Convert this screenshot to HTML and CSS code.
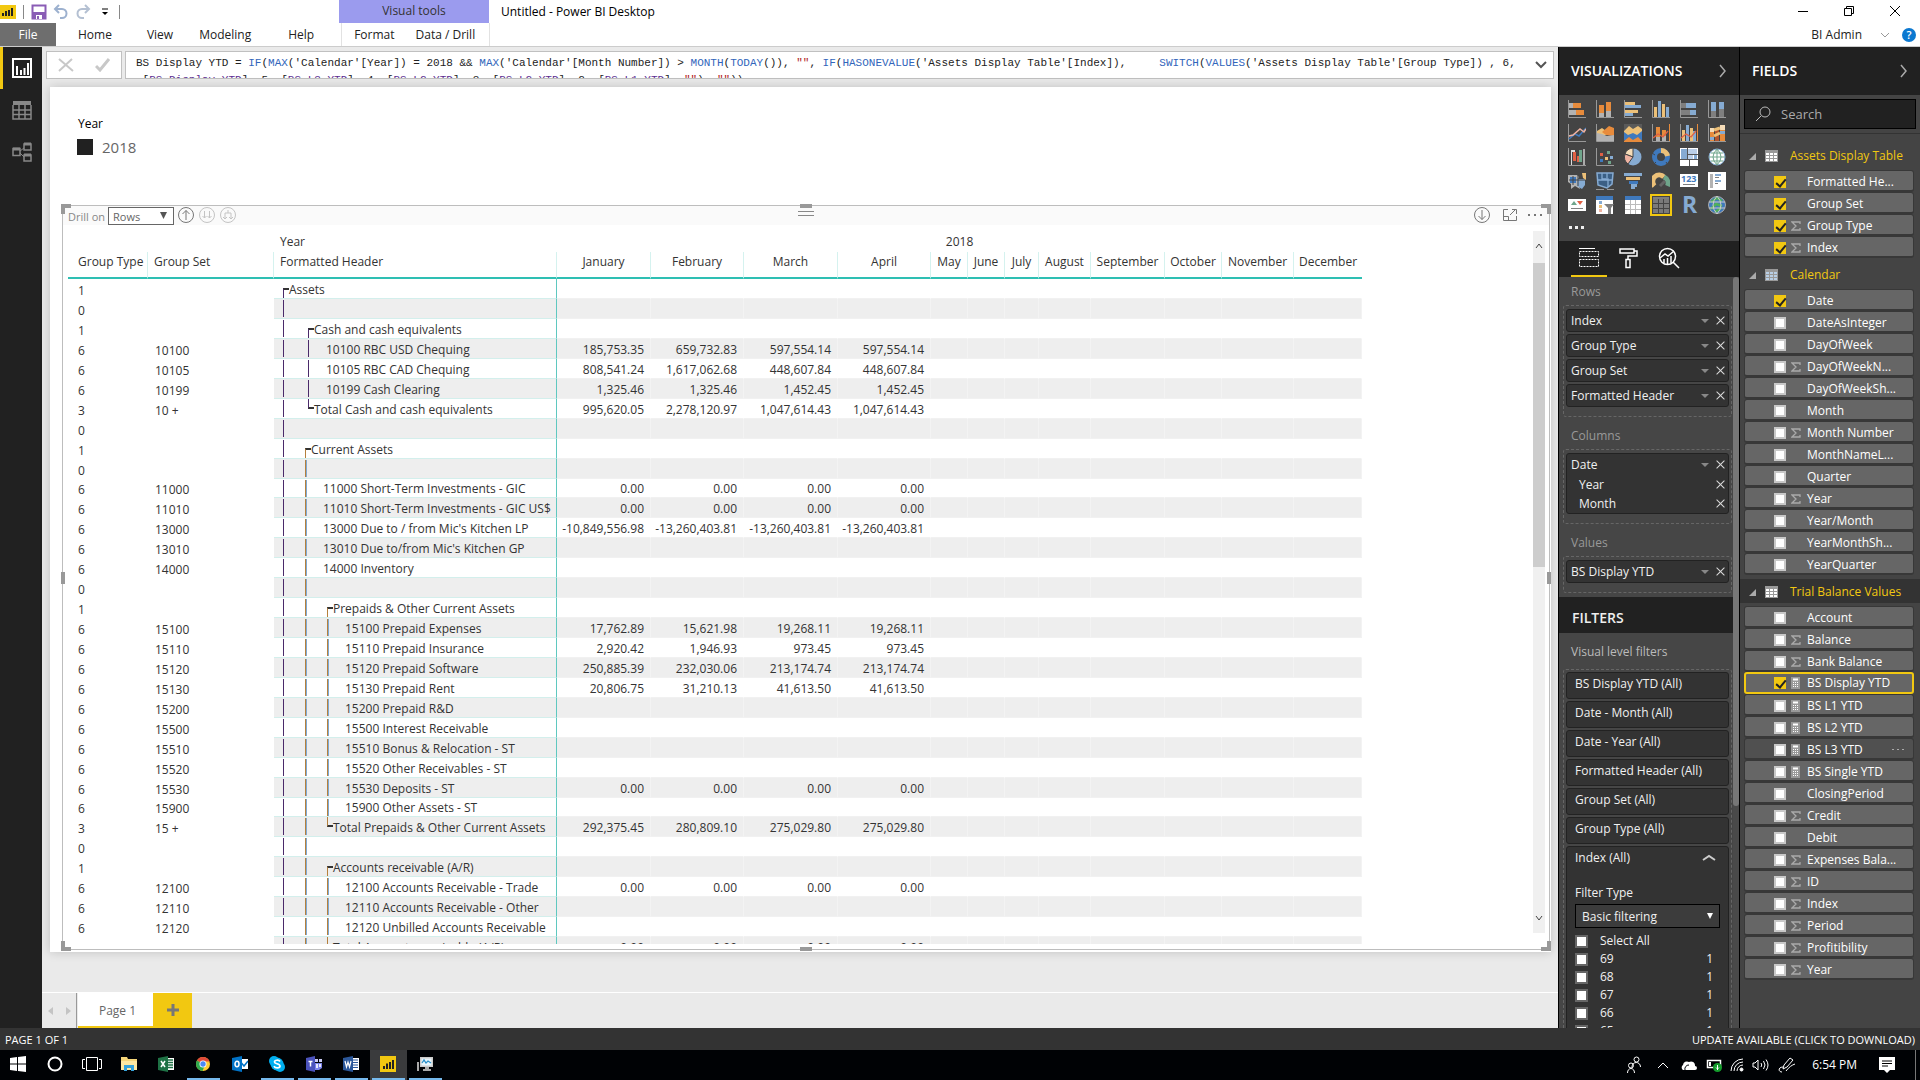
FILE: index.html
```html
<!DOCTYPE html>
<html lang="en">
<head>
<meta charset="utf-8">
<title>Untitled - Power BI Desktop</title>
<link rel="stylesheet" href="styles.css">
</head>
<body>
<header class="titlebar">
  <div class="quick">
    <svg class="logo" width="16" height="14" viewBox="0 0 16 14"><rect width="16" height="14" fill="#f2c811"/><path d="M3 11V8M6 11V6M9 11V5M12 11V3" stroke="#222" stroke-width="2"/></svg>
    <i class="tick-sep"></i>
    <button class="ico" aria-label="Save"><svg width="16" height="16" viewBox="0 0 16 16"><path d="M1.500 1.500h13v13h-13z" fill="#fff" stroke="#8a5cb5" stroke-width="2"/><path d="M2 8h12v6H2z" fill="#8a5cb5"/><path d="M5 11h6v4H5z" fill="#fff"/><path d="M6 12h2v3H6z" fill="#8a5cb5"/></svg></button>
    <button class="ico" aria-label="Undo"><svg width="16" height="16" viewBox="0 0 16 16" fill="none" stroke="#9db1cf" stroke-width="2"><path d="M6 1L2 5l4 4M2 5h7a4 4 0 0 1 0 9H7"/></svg></button>
    <button class="ico" aria-label="Redo"><svg width="16" height="16" viewBox="0 0 16 16" fill="none" stroke="#b4c0d2" stroke-width="2"><path d="M10 1l4 4-4 4M14 5H7a4 4 0 0 0 0 9h2"/></svg></button>
    <button class="ico" aria-label="Customize toolbar"><svg width="8" height="8" viewBox="0 0 8 8"><path d="M1 1h6" stroke="#000"/><path d="M1 4h6L4 7z"/></svg></button>
    <i class="tick-sep"></i>
  </div>
  <div class="context-title">Visual tools</div>
  <h1>Untitled - Power BI Desktop</h1>
  <div class="window-buttons">
    <button aria-label="Minimize"><svg width="12" height="12" viewBox="0 0 12 12"><path d="M1 6.500h10" stroke="#000"/></svg></button>
    <button aria-label="Restore"><svg width="12" height="12" viewBox="0 0 12 12" fill="none" stroke="#000"><path d="M1.500 3.500h7v7h-7zM3.500 3.500v-2h7v7h-2"/></svg></button>
    <button aria-label="Close"><svg width="12" height="12" viewBox="0 0 12 12" stroke="#000"><path d="M1 1l10 10M11 1L1 11"/></svg></button>
  </div>
</header>
<nav class="ribbon">
  <button class="file">File</button>
  <button>Home</button><button>View</button><button>Modeling</button><button>Help</button>
  <div class="context-tabs"><button>Format</button><button>Data / Drill</button></div>
  <div class="account"><span>BI Admin</span>
    <svg width="10" height="6" viewBox="0 0 10 6" fill="none" stroke="#999"><path d="M1 1l4 4 4-4"/></svg>
    <button class="help" aria-label="Help">?</button></div>
</nav>

<div class="workspace">
  <nav class="rail">
    <button class="on" aria-label="Report"><svg width="20" height="20" viewBox="0 0 20 20"><path d="M1 1h18v18H1z" fill="none" stroke="#fff" stroke-width="2"/><path d="M5 17V8M9 17v-5M12.500 17v-7M16 17V5" stroke="#fff" stroke-width="2"/></svg></button>
    <button aria-label="Data"><svg width="20" height="20" viewBox="0 0 20 20" fill="none" stroke="#888"><path d="M1 3h18" stroke-width="4"/><path d="M1 5v14h18V5M1 10h18M1 14.500h18M7 5v14M13 5v14" stroke-width="1.500"/></svg></button>
    <button aria-label="Relationships"><svg width="20" height="20" viewBox="0 0 20 20" fill="none" stroke="#888"><path d="M1 6.500h7v7H1zM12 2h7v6h-7zM12 13h7v6h-7z" stroke-width="1.500"/><path d="M12 2h7M12 13h7M1 7h7" stroke-width="3"/><path d="M8 9l4-3M8 11l4 4"/></svg></button>
  </nav>

  <main>
    <div class="formula">
      <div class="formula-buttons">
        <button aria-label="Cancel"><svg width="16" height="14" viewBox="0 0 16 14" stroke="#c8c8c8" stroke-width="2"><path d="M1 1l14 12M14 1L1 13"/></svg></button>
        <button aria-label="Commit"><svg width="16" height="14" viewBox="0 0 16 14" fill="none" stroke="#c8c8c8" stroke-width="3"><path d="M1 8l4 4 9-11"/></svg></button>
      </div>
      <div class="formula-box">
        <pre class="code" role="textbox" aria-label="Measure formula">BS Display YTD = <b>IF</b>(<b>MAX</b>('Calendar'[Year]) = 2018 &amp;&amp; <b>MAX</b>('Calendar'[Month Number]) &gt; <b>MONTH</b>(<b>TODAY</b>()), <s>""</s>, <b>IF</b>(<b>HASONEVALUE</b>('Assets Display Table'[Index]),     <b>SWITCH</b>(<b>VALUES</b>('Assets Display Table'[Group Type]) , 6,
 [<u>BS Display YTD</u>], 5, [<u>BS L3 YTD</u>], 4, [<u>BS L2 YTD</u>], 3, [<u>BS L2 YTD</u>], 2, [<u>BS L1 YTD</u>], <s>""</s>), <s>""</s>))</pre>
        <button aria-label="Expand formula"><svg width="12" height="8" viewBox="0 0 12 8" fill="none" stroke="#555" stroke-width="2"><path d="M1 1l5 5 5-5"/></svg></button>
      </div>
    </div>

    <section class="page">
      <div class="slicer"><div class="slicer-title">Year</div>
        <label><input type="checkbox" checked> 2018</label></div>
      <div class="visual">
        <div class="visual-bar">
          <label for="drill">Drill on</label>
          <span class="drill-box"><select id="drill"><option>Rows</option></select><svg width="8" height="8" viewBox="0 0 8 8"><path d="M0 0h7L3.500 7z" fill="#555"/></svg></span>
          <button aria-label="Drill up"><svg width="18" height="18" viewBox="0 0 18 18" fill="none" stroke="#777"><circle cx="9" cy="9" r="7.500"/><path d="M9 14V4.500M5.500 8L9 4.500 12.500 8"/></svg></button>
          <button aria-label="Next level"><svg width="18" height="18" viewBox="0 0 18 18" fill="none" stroke="#c4c4c4"><circle cx="9" cy="9" r="7.500"/><path d="M6.500 5v7M4.500 10l2 2 2-2M11.500 5v7M9.500 10l2 2 2-2"/></svg></button>
          <button aria-label="Expand level"><svg width="18" height="18" viewBox="0 0 18 18" fill="none" stroke="#c4c4c4"><circle cx="9" cy="9" r="7.500"/><path d="M9 4v3M6 12V7h6v5M4 11l2 2 2-2M10 11l2 2 2-2"/></svg></button>
          <i class="grip"></i>
          <button class="push" aria-label="Drill down"><svg width="18" height="18" viewBox="0 0 18 18" fill="none" stroke="#777"><circle cx="9" cy="9" r="7.500"/><path d="M9 4v9.500M5.500 10L9 13.500 12.500 10"/></svg></button>
          <button class="focus" aria-label="Focus mode"><svg width="16" height="14" viewBox="0 0 16 14" fill="none" stroke="#777"><path d="M6 1.500H1.500v11h13V8M1.500 8.500h5v4M8 7l6-6M10 1.500h4.500V6"/></svg></button>
          <button aria-label="More options"><svg width="16" height="4" viewBox="0 0 16 4" fill="#777"><path d="M1 1h2v2H1zM7 1h2v2H7zM13 1h2v2h-2z"/></svg></button>
        </div>
        <div class="visual-body">
          <div class="matrix-clip">
            <table class="matrix">
              <colgroup><col class="c80"><col class="c126"><col class="c283"><col class="c94"><col class="c93"><col class="c94"><col class="c93"><col class="c37"><col class="c37"><col class="c34"><col class="c52"><col class="c74"><col class="c57"><col class="c72"><col class="c68"></colgroup>
              <thead>
                <tr class="top"><th></th><th></th><th class="left">Year</th><th colspan="12">2018</th></tr>
                <tr class="heads"><th class="left">Group Type</th><th class="left">Group Set</th><th class="left">Formatted Header</th><th>January</th><th>February</th><th>March</th><th>April</th><th>May</th><th>June</th><th>July</th><th>August</th><th>September</th><th>October</th><th>November</th><th>December</th></tr>
              </thead>
              <tbody id="rows"></tbody>
            </table>
          </div>
          <div class="scroll"><svg width="8" height="6" viewBox="0 0 8 6" fill="none" stroke="#444"><path d="M1 5l3-4 3 4"/></svg><i></i><svg width="8" height="6" viewBox="0 0 8 6" fill="none" stroke="#444"><path d="M1 1l3 4 3-4"/></svg></div>
        </div>
        <i class="h tl"></i><i class="h tr"></i><i class="h bl"></i><i class="h br"></i>
        <i class="h tc"></i><i class="h bc"></i><i class="h ml"></i><i class="h mr"></i>
      </div>
    </section>

    <footer class="tabs">
      <div class="pager"><button aria-label="Previous page"><svg width="6" height="8" viewBox="0 0 6 8"><path d="M5 0v8L0 4z" fill="#c4c4c4"/></svg></button><button aria-label="Next page"><svg width="6" height="8" viewBox="0 0 6 8"><path d="M1 0v8l5-4z" fill="#c4c4c4"/></svg></button></div>
      <button class="tab">Page 1</button>
      <button class="add" aria-label="New page"><svg width="12" height="12" viewBox="0 0 12 12" stroke="#777" stroke-width="3"><path d="M6 0v12M0 6h12"/></svg></button>
    </footer>
  </main>

  <aside class="viz">
    <div class="pane-head"><h2>VISUALIZATIONS</h2><svg width="8" height="14" viewBox="0 0 8 14" fill="none" stroke="#aaa" stroke-width="1.500"><path d="M1 1l5 6-5 6"/></svg></div>
    <div class="gallery" id="gallery"></div>
    <div class="viz-tabs">
      <button class="on" aria-label="Fields"><svg width="22" height="22" viewBox="0 0 22 22" fill="none" stroke="#fff"><path d="M1 1.500h16"/><path d="M1.500 4.500h19v5h-19zM1.500 12.500h19v7h-19z" stroke-dasharray="2 1"/></svg></button>
      <button aria-label="Format"><svg width="20" height="22" viewBox="0 0 20 22" fill="none" stroke="#fff" stroke-width="1.500"><path d="M1 2h14v4H1zM15 4h3v5H9v4M7 12.500h4v8H7z"/></svg></button>
      <button aria-label="Analytics"><svg width="22" height="22" viewBox="0 0 22 22" fill="none" stroke="#fff" stroke-width="1.500"><circle cx="9.500" cy="9.500" r="8"/><path d="M15 15l6 6M2 11l5-4 3 2 6-5M6 16v-4M9.500 17v-6M13 16V9"/></svg></button>
    </div>
    <div class="viz-scroll">
      <div class="viz-inner">
        <h3>Rows</h3>
        <div class="well">
          <div class="pill"><div><span>Index</span><button class="dd" aria-label="Options"></button><button class="x" aria-label="Remove"></button></div></div>
          <div class="pill"><div><span>Group Type</span><button class="dd" aria-label="Options"></button><button class="x" aria-label="Remove"></button></div></div>
          <div class="pill"><div><span>Group Set</span><button class="dd" aria-label="Options"></button><button class="x" aria-label="Remove"></button></div></div>
          <div class="pill"><div><span>Formatted Header</span><button class="dd" aria-label="Options"></button><button class="x" aria-label="Remove"></button></div></div>
        </div>
        <h3>Columns</h3>
        <div class="well">
          <div class="pill"><div><span>Date</span><button class="dd" aria-label="Options"></button><button class="x" aria-label="Remove"></button></div>
            <div class="sub"><span>Year</span><button class="x" aria-label="Remove"></button></div>
            <div class="sub"><span>Month</span><button class="x" aria-label="Remove"></button></div></div>
        </div>
        <h3>Values</h3>
        <div class="well">
          <div class="pill"><div><span>BS Display YTD</span><button class="dd" aria-label="Options"></button><button class="x" aria-label="Remove"></button></div></div>
        </div>
        <h2 class="filters-head">FILTERS</h2>
        <h3 class="level">Visual level filters</h3>
        <div class="well filters">
          <div class="card">BS Display YTD (All)</div>
          <div class="card">Date - Month (All)</div>
          <div class="card">Date - Year (All)</div>
          <div class="card">Formatted Header (All)</div>
          <div class="card">Group Set (All)</div>
          <div class="card">Group Type (All)</div>
          <div class="card open">
            <div class="card-head">Index (All)<svg width="14" height="8" viewBox="0 0 14 8" fill="none" stroke="#ccc" stroke-width="2"><path d="M1 6l6-4 6 4"/></svg></div>
            <label class="ftype" for="ftype">Filter Type</label>
            <span class="fselect"><select id="ftype"><option>Basic filtering</option></select><svg width="6" height="6" viewBox="0 0 6 6"><path d="M0 0h6L3 6z" fill="#fff"/></svg></span>
            <label class="opt"><input type="checkbox"><span>Select All</span></label>
            <label class="opt"><input type="checkbox"><span>69</span><em>1</em></label>
            <label class="opt"><input type="checkbox"><span>68</span><em>1</em></label>
            <label class="opt"><input type="checkbox"><span>67</span><em>1</em></label>
            <label class="opt"><input type="checkbox"><span>66</span><em>1</em></label>
            <label class="opt"><input type="checkbox"><span>65</span><em>1</em></label>
          </div>
        </div>
      </div>
      <i class="thumb"></i>
    </div>
  </aside>

  <aside class="fields">
    <div class="pane-head"><h2>FIELDS</h2><svg width="8" height="14" viewBox="0 0 8 14" fill="none" stroke="#aaa" stroke-width="1.500"><path d="M1 1l5 6-5 6"/></svg></div>
    <div class="search-wrap"><label class="search"><svg width="16" height="16" viewBox="0 0 16 16" fill="none" stroke="#bbb"><circle cx="10" cy="6" r="5"/><path d="M6 10l-5 5"/></svg><input type="text" placeholder="Search" aria-label="Search"></label></div>
    <div id="fields"></div>
  </aside>
</div>

<div class="status"><span>PAGE 1 OF 1</span><a href="#">UPDATE AVAILABLE (CLICK TO DOWNLOAD)</a></div>

<div class="taskbar">
  <button aria-label="Start"><svg width="16" height="16" viewBox="0 0 16 16" fill="#fff"><path d="M0 2l7-1v6.500H0zM8 1l8-1v7.500H8zM0 8.500h7V15l-7-1zM8 8.500h8V16l-8-1z"/></svg></button>
  <button aria-label="Cortana"><svg width="16" height="16" viewBox="0 0 16 16"><circle cx="8" cy="8" r="6.500" fill="none" stroke="#fff" stroke-width="2"/></svg></button>
  <button aria-label="Task view"><svg width="20" height="16" viewBox="0 0 20 16" fill="none" stroke="#fff"><path d="M4.500 1.500h11v13h-11zM3 3.500H.5v9H3M17 3.500h2.500v9H17"/></svg></button>
  <button aria-label="File Explorer"><svg width="16" height="16" viewBox="0 0 16 16"><path d="M0 1h6l1 2h9v11H0z" fill="#f5d67a"/><path d="M0 5h16v9H0z" fill="#ffe9a2"/><path d="M3 15V9h10v6h-3v-3H6v3z" fill="#35a3dc"/></svg></button>
  <button aria-label="Excel"><svg width="16" height="16" viewBox="0 0 16 16"><path d="M9 2h7v12H9z" fill="#fff"/><path d="M10 4h5M10 6.500h5M10 9h5M10 11.500h5" stroke="#1e7145" stroke-width="1.500"/><path d="M0 2l10-2v16L0 14z" fill="#1e7145"/><path d="M3 5l4 6M7 5l-4 6" stroke="#fff" stroke-width="1.500"/></svg></button>
  <button class="run" aria-label="Chrome"><svg width="16" height="16" viewBox="0 0 16 16"><circle cx="8" cy="8" r="7" fill="#fc3"/><path d="M8 8L2 4.500A7 7 0 0 1 14.500 5.500H8z" fill="#e04a3a"/><path d="M8 8L2 4.500A7 7 0 0 0 7.500 15L10 9z" fill="#2da94f"/><circle cx="8" cy="8" r="3.500" fill="#fff"/><circle cx="8" cy="8" r="2.700" fill="#4a8af4"/></svg></button>
  <button aria-label="Outlook"><svg width="16" height="16" viewBox="0 0 16 16"><path d="M8 3h8v10H8z" fill="#fff"/><path d="M9.500 7l2.500 3 4-5" fill="none" stroke="#0072c6" stroke-width="1.500"/><path d="M0 2l10-2v16L0 14z" fill="#0072c6"/><ellipse cx="5" cy="8" rx="2" ry="2.700" fill="none" stroke="#fff" stroke-width="1.500"/></svg></button>
  <button class="run" aria-label="Skype"><svg width="16" height="16" viewBox="0 0 16 16"><circle cx="5" cy="5" r="5" fill="#00aff0"/><circle cx="11" cy="11" r="5" fill="#00aff0"/><circle cx="8" cy="8" r="6.500" fill="#00aff0"/><path d="M11 5.500C10 3.500 5.500 4 5.500 6s5.500 1.500 5.500 4-5 2.500-6 .2" fill="none" stroke="#fff" stroke-width="1.700"/></svg></button>
  <button class="run" aria-label="Teams"><svg width="16" height="16" viewBox="0 0 16 16"><path d="M9 3h3v3H9zM13 3h3v3h-3z" fill="#c9cbf3"/><path d="M9 7h7v5l-3 2H9z" fill="#7b83eb"/><path d="M10 8h2v4h-2zM13 8h2v3h-2z" fill="#e8e9fb"/><path d="M0 2l9-2v16l-9-2z" fill="#4b53bc"/><path d="M2.500 5.500h4M4.500 5.500v5" stroke="#fff" stroke-width="1.500"/></svg></button>
  <button class="run" aria-label="Word"><svg width="16" height="16" viewBox="0 0 16 16"><path d="M9 2h7v12H9z" fill="#fff"/><path d="M10 4h5M10 6.500h5M10 9h5M10 11.500h5" stroke="#2b579a"/><path d="M0 2l10-2v16L0 14z" fill="#2b579a"/><path d="M2 5l1.500 6L5 6l1.500 5L8 5" fill="none" stroke="#fff" stroke-width="1.200"/></svg></button>
  <button class="run active" aria-label="Power BI Desktop"><svg width="16" height="16" viewBox="0 0 16 16"><path d="M0 0h16v16H0z" fill="#f2c811"/><path d="M4 13v-3M7 13V7.500M10 13V6M13 13V4" stroke="#222" stroke-width="2"/></svg></button>
  <button class="run" aria-label="Performance monitor"><svg width="16" height="16" viewBox="0 0 16 16"><path d="M3 1h13v10H3z" fill="#ccc"/><path d="M4.500 2.500h10v7h-10z" fill="#e9f6fd"/><path d="M5 7l2-3 2 3 2-2 3 2" fill="none" stroke="#2d91c9" stroke-width="1.300"/><path d="M0 6h2v9H0zM6 13h8v2H6zM8 11h4v2H8z" fill="#aaa"/></svg></button>
  <div class="tray">
    <svg class="people" width="14" height="18" viewBox="0 0 14 18" fill="none" stroke="#fff"><circle cx="9.500" cy="3.500" r="2.500"/><path d="M5 11c0-6 8.500-6 8.500 0"/><circle cx="4" cy="9.500" r="2.500"/><path d="M.5 17c0-6 7-6 7 0"/></svg>
    <svg class="more" width="12" height="8" viewBox="0 0 12 8" fill="none" stroke="#fff"><path d="M1 7l5-5 5 5"/></svg>
    <svg width="18" height="12" viewBox="0 0 18 12" fill="#fff"><path d="M3 11a3 3 0 0 1 0-5 4 4 0 0 1 6-3 4 4 0 0 1 6 4 2 2 0 0 1 0 4z"/><path d="M5 11a4 4 0 0 1 4-5" fill="none" stroke="#000205"/></svg>
    <svg width="16" height="14" viewBox="0 0 16 14"><path d="M1.500 2.500h13v7h-13z" fill="none" stroke="#fff" stroke-width="1.500"/><path d="M3 4h2v4H3z" fill="#fff"/><circle cx="11.500" cy="9.500" r="4.500" fill="#149c2c"/><path d="M11.500 7v5M10 9.500l1.500 1.500L13 9.500" stroke="#fff" fill="none"/></svg>
    <svg width="14" height="14" viewBox="0 0 14 14" fill="none" stroke="#fff"><path d="M1 13A12 12 0 0 1 13 1M4 13a9 9 0 0 1 9-9M7 13a6 6 0 0 1 6-6"/><circle cx="11.500" cy="11.500" r="1.500" fill="#fff"/></svg>
    <svg width="18" height="14" viewBox="0 0 18 14" fill="none" stroke="#fff"><path d="M1 5h2l3-3v10L3 9H1zM9 5q1.500 2 0 4M11.500 3q3 4 0 8M14 1.500q4 5.500 0 11"/></svg>
    <svg width="18" height="18" viewBox="0 0 18 18" fill="none" stroke="#fff"><path d="M5 13l1-4 6-7 3 2-6 7-4 2zM5 11c-5 0-5 5-1 5M8 15c3-4 6-6 9-7"/></svg>
    <time>6:54 PM</time>
    <svg width="16" height="16" viewBox="0 0 16 16"><path d="M0 0h16v13h-5l-3 3-3-3H0z" fill="#fff"/><path d="M3 4h10M3 6.500h10M3 9h6" stroke="#000"/></svg>
  </div>
</div>
<script src="script.js"></script>
</body>
</html>
```
FILE: styles.css
```css
:root {
  --yellow: #f2c811;
  --dark: #212121;
  --pane: #444;
  --teal: #2ebfb3;
}
* { box-sizing: border-box; }
body {
  margin: 0;
  height: 100vh;
  display: flex;
  flex-direction: column;
  overflow: hidden;
  background: #fff;
  color: #222;
  font: 12px/16px "Open Sans", "Noto Sans", sans-serif;
}
button { border: 0; padding: 0; background: none; font: inherit; color: inherit; display: flex; align-items: center; justify-content: center; }
h1, h2, h3 { margin: 0; font: inherit; }
select, input { font: inherit; color: inherit; margin: 0; }
svg { display: block; flex: none; }

/* Title bar and ribbon */
.titlebar { display: flex; height: 23px; flex: none; }
.quick { display: flex; align-items: center; width: 339px; padding-top: 1px; gap: 7px; }
.quick .ico { width: 15px; }
.tick-sep { width: 1px; height: 14px; background: #888; }
.context-title { width: 150px; background: #9b9bee; text-align: center; line-height: 21px; color: #333; }
h1 { padding-left: 12px; line-height: 24px; color: #000; }
.window-buttons { margin-left: auto; display: flex; padding-right: 2px; }
.window-buttons button { width: 46px; height: 21px; }
.ribbon { display: flex; height: 24px; flex: none; border-bottom: 1px solid #ccc; }
.ribbon > button { padding: 0 12px; }
.ribbon > button:nth-child(2) { margin: 0 11px 0 10px; }
.ribbon > button:nth-child(4) { margin: 0 13px 0 2px; }
.ribbon .file { width: 56px; background: #6e6e6e; color: #fff; }
.context-tabs { display: flex; width: 149px; margin-left: 15px; padding: 0 14px 0 12px; justify-content: space-between; border: solid #e2e2e2; border-width: 0 1px; }
.account { margin-left: auto; display: flex; align-items: center; padding-right: 4px; gap: 12px; }
.account span { padding-right: 6px; }
.help { width: 14px; height: 14px; border-radius: 50%; background: #0b78d0; color: #fff; font-size: 11px; font-weight: 600; }

.workspace { flex: 1; min-height: 0; display: grid; grid-template-columns: 42px minmax(0, 1fr) 181px 181px; }
.rail { background: var(--dark); }
.rail button { width: 42px; height: 42px; border-left: 3px solid transparent; padding-right: 2px; }
.rail button.on { border-color: var(--yellow); }

main { display: flex; flex-direction: column; min-height: 0; background: #eaeaea; }
.formula { display: flex; gap: 3px; padding: 4px 4px 8px; flex: none; }
.formula-buttons { display: flex; width: 76px; height: 28px; background: #fff; border: 1px solid #c0c0c0; }
.formula-buttons button { flex: 1; }
.formula-box { flex: 1; min-width: 0; display: flex; height: 28px; background: #fff; border: 1px solid #c0c0c0; }
.formula-box button { width: 24px; }
.code { flex: 1; min-width: 0; overflow: hidden; margin: 0; padding: 3px 0 0 10px; font: 11px/17px "Liberation Mono", monospace; color: #222; }
.code b { font-weight: 400; color: #3165bb; }
.code s { text-decoration: none; color: #b22222; }
.code u { text-decoration: none; color: #5c2d91; }

.page { flex: 1; min-height: 0; margin: 0 7px 40px 8px; padding: 0 1px 2px 12px; background: #fff; box-shadow: 0 0 10px rgba(0, 0, 0, .18); display: flex; flex-direction: column; }
.slicer { height: 118px; flex: none; padding: 29px 15px 0; }
.slicer-title { padding-left: 1px; color: #000; }
.slicer label { display: flex; align-items: center; gap: 9px; padding-top: 4px; font-size: 15px; line-height: 22px; color: #666; }
.slicer input { appearance: none; width: 16px; height: 16px; background: var(--dark); }

.visual { position: relative; flex: 1; min-height: 0; border: 1px solid #bdbdbd; display: flex; flex-direction: column; }
.visual-bar { position: relative; height: 19px; flex: none; display: flex; align-items: center; gap: 3px; padding: 0 6px 2px 5px; background: #fafafa; color: #888; }
.visual-bar label { width: 37px; white-space: nowrap; font-size: 11px; margin-top: 5px; }
.drill-box { display: flex; align-items: center; width: 66px; height: 18px; margin: 3px 0 0; border: 1px solid #666; background: #fff; padding-right: 5px; }
.drill-box select { appearance: none; border: 0; background: none; flex: 1; min-width: 0; padding: 1px 4px 0; color: #666; font-size: 11px; line-height: 15px; }
.visual-bar .push { margin-left: auto; }
.visual-bar .focus { margin: 0 6px 0 8px; }
.grip { position: absolute; left: 50%; top: 5px; width: 16px; height: 5px; margin-left: -8px; border: solid #888; border-width: 1px 0; }
.visual-body { flex: 1; min-height: 0; display: flex; justify-content: space-between; padding: 6px 4px 5px 5px; }
.matrix-clip { overflow: hidden; }
.scroll { width: 12px; margin-bottom: 11px; background: #f0f0f0; display: flex; flex-direction: column; align-items: center; padding: 12px 0; }
.scroll i { width: 12px; height: 304px; margin: 14px 0 auto; background: #cdcdcd; }

.matrix { table-layout: fixed; width: 1294px; border-collapse: separate; border-spacing: 0; color: #333; }
.c80 { width: 80px; } .c126 { width: 126px; } .c283 { width: 283px; } .c94 { width: 94px; } .c93 { width: 93px; }
.c37 { width: 37px; } .c34 { width: 34px; } .c52 { width: 52px; } .c74 { width: 74px; } .c57 { width: 57px; }
.c72 { width: 72px; } .c68 { width: 68px; }
.matrix th { font-weight: 400; padding: 1px 0 0; line-height: 20px; height: 21px; vertical-align: top; white-space: nowrap; }
.matrix .heads th { height: 27px; padding-top: 0; border-right: 1px solid #d5f2ef; border-bottom: 2px solid var(--teal); }
.matrix .heads th:last-child { border-right: 0; }
.matrix th.left { text-align: left; padding-left: 6px; }
.matrix th.left:first-child { padding-left: 10px; }
.matrix td { height: 20px; padding: 2px 6px 0 0; line-height: 17px; text-align: right; white-space: nowrap; }
.matrix tr:nth-child(16n + 11) td { height: 19px; line-height: 16px; }
.matrix td:nth-child(1), .matrix td:nth-child(2) { text-align: left; padding-left: 10px; }
.matrix td:nth-child(2) { padding-left: 7px; }
.matrix td:nth-child(n + 3) { border-bottom: 1px solid #f1f1f1; }
.matrix td:nth-child(n + 4) { border-right: 1px solid rgba(255, 255, 255, .3); }
.matrix td.tree { padding: 0 0 0 9px; text-align: left; border-bottom-color: #d3efec; border-right: 1px solid #5fc8c0; overflow: hidden; }
.matrix tbody tr:nth-child(even) td:nth-child(n + 3) { background: #eee; }
.tree div { display: flex; align-items: center; height: 19px; }
tr:nth-child(16n + 11) .tree div { height: 18px; }
.tree span { padding-top: 2px; }
.tree i { flex: none; width: 22px; height: 17px; border-left: 1px solid #4a2a6a; }
.tree i + i { border-left-color: #b5803c; box-shadow: inset 1px 0 #7fa9d4; }
.tree i.wide + i { border-left-color: #4a2a6a; box-shadow: none; }
.tree i.wide { width: 25px; }
.tree i.near { width: 18px; }
.tree i.open, .tree i.close { width: 6px; height: 10px; border-top: 2px solid #333; align-self: flex-end; box-shadow: none; }
.tree i.close { border-top: 0; border-bottom: 2px solid #333; align-self: flex-start; }

.h { position: absolute; border: 0 solid #999; width: 10px; height: 10px; }
.tl { left: -2px; top: -2px; border-width: 4px 0 0 4px; }
.tr { right: -2px; top: -2px; border-width: 4px 4px 0 0; }
.bl { left: -2px; bottom: -2px; border-width: 0 0 4px 4px; }
.br { right: -2px; bottom: -2px; border-width: 0 4px 4px 0; }
.tc, .bc { left: 50%; width: 12px; height: 4px; margin-left: -6px; background: #999; }
.tc { top: -2px; } .bc { bottom: -2px; }
.ml, .mr { top: 50%; width: 4px; height: 12px; margin-top: -6px; background: #999; }
.ml { left: -2px; } .mr { right: -2px; }

.tabs { flex: none; height: 36px; display: flex; border-top: 1px solid #fff; }
.pager { display: flex; width: 35px; margin-right: 1px; border-right: 1px solid #999; }
.pager button { flex: 1; }
.tab { width: 75px; padding: 2px 0 0 4px; background: #fff; border-bottom: 2px solid var(--yellow); color: #666; }
.add { width: 39px; background: var(--yellow); padding-bottom: 2px; }

/* Panes */
.viz, .fields { min-height: 0; display: flex; flex-direction: column; overflow: hidden; border-left: 1px solid #000; background: var(--pane); color: #f0f0f0; }
.pane-head { display: flex; justify-content: space-between; align-items: center; height: 48px; flex: none; padding: 0 12px; background: var(--dark); color: #fff; }
.pane-head h2, .filters-head { font-size: 14px; font-weight: 600; }
.gallery { height: 146px; flex: none; display: grid; grid-template-columns: repeat(6, 28px); grid-auto-rows: 24px; padding: 2px 4px; place-items: center; }
.gallery button { width: 22px; height: 22px; }
.gallery .on { border: 2px solid var(--yellow); }
.viz-tabs { display: flex; height: 36px; flex: none; padding-left: 12px; gap: 4px; background: var(--dark); }
.viz-tabs button { width: 36px; border-bottom: 2px solid transparent; }
.viz-tabs .on { border-color: var(--yellow); }
.viz-scroll { flex: 1; min-height: 0; display: grid; grid-template-columns: minmax(0, 1fr) 6px; background: #4a4a4a; }
.viz-inner { min-height: 0; overflow: hidden; background: #464646; }
.thumb { height: 529px; border-radius: 3px; background: #777; }
.viz h3 { height: 28px; line-height: 30px; padding: 0 12px; color: #999; }
.well { margin: 0 1px 4px 4px; padding: 3px 2px 9px; border: 1px dashed #666; border-radius: 3px; display: flex; flex-direction: column; gap: 2px; }
.pill, .card { background: #333; border: 1px solid #222; border-radius: 3px; }
.pill > div { display: flex; align-items: center; height: 21px; padding: 0 3px 0 4px; }
.pill > .sub { height: 19px; padding-left: 12px; }
.pill span { flex: 1; white-space: nowrap; }
.dd::before { content: ""; border: solid transparent; border-width: 4px 4px 0; border-top-color: #888; }
.dd { width: 10px; margin-right: 6px; }
.x { width: 9px; height: 9px; position: relative; }
.x::before, .x::after { content: ""; position: absolute; width: 11px; height: 1px; background: #ddd; transform: rotate(45deg); }
.x::after { transform: rotate(-45deg); }
.viz .filters-head { height: 36px; line-height: 42px; padding-left: 13px; background: var(--dark); color: #eee; }
.viz .level { height: 36px; line-height: 38px; color: #bbb; }
.filters { padding: 2px; }
.card { height: 27px; line-height: 22px; padding: 0 8px; flex: none; }
.card.open { height: auto; padding-bottom: 12px; }
.card-head { display: flex; align-items: center; justify-content: space-between; padding-right: 4px; }
.ftype { display: block; padding-top: 13px; line-height: 22px; }
.fselect { display: flex; align-items: center; height: 24px; border: 1px solid #000; background: #3c3c3c; padding-right: 6px; margin-bottom: 4px; }
.fselect select { appearance: none; border: 0; background: none; flex: 1; min-width: 0; padding: 2px 6px 0; }
.opt { display: flex; align-items: center; height: 18px; gap: 12px; }
.opt span { flex: 1; }
.opt em { font-style: normal; padding-right: 7px; }
.opt input, .row input { appearance: none; width: 13px; height: 13px; flex: none; background: #fff; border: 2px solid #666; }

.search-wrap { padding: 4px; border-bottom: 1px solid #333; }
.search { display: flex; align-items: center; height: 30px; gap: 10px; padding: 0 10px; background: var(--dark); border: 1px solid #000; }
.search input { border: 0; background: none; width: 100%; min-width: 0; padding: 0; outline: 0; font-size: 13px; }
.search input::placeholder { color: #aaa; opacity: 1; }
#fields { padding-top: 5px; }
.group { display: flex; align-items: center; height: 24px; margin: 4px 0 3px; padding: 2px 0 0 9px; color: var(--yellow); white-space: nowrap; }
.group.hl { background: #333; }
.group::before { content: ""; border: solid transparent; border-width: 0 0 7px 7px; border-bottom-color: #aaa; margin-right: 9px; }
.group svg { margin-right: 12px; }
.row { display: flex; align-items: center; height: 22px; margin: 0 6px 0 4px; padding: 2px 0 0 29px; background: #666; border: 1px solid #383838; border-bottom-width: 2px; border-radius: 3px; color: #fff; white-space: nowrap; }
.row.sel { border: 2px solid var(--yellow); padding: 0 0 0 28px; }
.row.hover { background: #505050; }
.row input { width: 12px; height: 12px; border-color: #c8c8c8; position: relative; }
.row input:checked { background: var(--yellow); border-color: var(--yellow); }
.row input:checked::after { content: ""; position: absolute; left: 2px; top: -1px; width: 4px; height: 8px; border: solid #222; border-width: 0 2px 2px 0; transform: rotate(40deg); }
.row .kind { width: 21px; padding-left: 5px; display: flex; flex: none; }
.row .dots { margin: 0 8px 0 auto; }

.status { display: flex; justify-content: space-between; height: 22px; flex: none; padding: 0 5px; font-size: 11px; line-height: 23px; background: #333; color: #fff; }
.status a { color: #fff; text-decoration: none; }
.taskbar { display: flex; height: 30px; flex: none; background: #000205; color: #fff; }
.taskbar button { width: 37px; padding-right: 2px; border-bottom: 2px solid transparent; }
.taskbar .run { border-image: linear-gradient(90deg, transparent 4px, #76b9ed 4px, #76b9ed 33px, transparent 33px) 2; border-width: 0 0 2px; }
.taskbar .active { background: #3a3b3d; }
.tray { margin-left: auto; display: flex; align-items: center; gap: 8px; margin-right: 4px; padding-right: 20px; border-right: 1px solid #777; }
.tray time { padding: 0 14px 0 8px; }
.tray .people { margin-right: 8px; }
.tray .more { margin-right: 3px; }
```
FILE: script.js
```js
// Matrix rows: type, set, tree guides, caption, values
// Guides: v = line, w = wide line, n = line before text, o = opening corner, c = closing corner
const data = [
  [1, '', 'o', 'Assets'],
  [0, '', 'v', ''],
  [1, '', 'wo', 'Cash and cash equivalents'],
  [6, '10100', 'wn', '10100 RBC USD Chequing', '185,753.35', '659,732.83', '597,554.14', '597,554.14'],
  [6, '10105', 'wn', '10105 RBC CAD Chequing', '808,541.24', '1,617,062.68', '448,607.84', '448,607.84'],
  [6, '10199', 'wn', '10199 Cash Clearing', '1,325.46', '1,325.46', '1,452.45', '1,452.45'],
  [3, '10 +', 'wc', 'Total Cash and cash equivalents', '995,620.05', '2,278,120.97', '1,047,614.43', '1,047,614.43'],
  [0, '', 'v', ''],
  [1, '', 'vo', 'Current Assets'],
  [0, '', 'vv', ''],
  [6, '11000', 'vn', '11000 Short-Term Investments - GIC', '0.00', '0.00', '0.00', '0.00'],
  [6, '11010', 'vn', '11010 Short-Term Investments - GIC US$', '0.00', '0.00', '0.00', '0.00'],
  [6, '13000', 'vn', "13000 Due to / from Mic's Kitchen LP", '-10,849,556.98', '-13,260,403.81', '-13,260,403.81', '-13,260,403.81'],
  [6, '13010', 'vn', "13010 Due to/from Mic's Kitchen GP"],
  [6, '14000', 'vn', '14000 Inventory'],
  [0, '', 'vv', ''],
  [1, '', 'vvo', 'Prepaids & Other Current Assets'],
  [6, '15100', 'vvn', '15100 Prepaid Expenses', '17,762.89', '15,621.98', '19,268.11', '19,268.11'],
  [6, '15110', 'vvn', '15110 Prepaid Insurance', '2,920.42', '1,946.93', '973.45', '973.45'],
  [6, '15120', 'vvn', '15120 Prepaid Software', '250,885.39', '232,030.06', '213,174.74', '213,174.74'],
  [6, '15130', 'vvn', '15130 Prepaid Rent', '20,806.75', '31,210.13', '41,613.50', '41,613.50'],
  [6, '15200', 'vvn', '15200 Prepaid R&D'],
  [6, '15500', 'vvn', '15500 Interest Receivable'],
  [6, '15510', 'vvn', '15510 Bonus & Relocation - ST'],
  [6, '15520', 'vvn', '15520 Other Receivables - ST'],
  [6, '15530', 'vvn', '15530 Deposits - ST', '0.00', '0.00', '0.00', '0.00'],
  [6, '15900', 'vvn', '15900 Other Assets - ST'],
  [3, '15 +', 'vvc', 'Total Prepaids & Other Current Assets', '292,375.45', '280,809.10', '275,029.80', '275,029.80'],
  [0, '', 'vv', ''],
  [1, '', 'vvo', 'Accounts receivable (A/R)'],
  [6, '12100', 'vvn', '12100 Accounts Receivable - Trade', '0.00', '0.00', '0.00', '0.00'],
  [6, '12110', 'vvn', '12110 Accounts Receivable - Other'],
  [6, '12120', 'vvn', '12120 Unbilled Accounts Receivable'],
  [3, '12 +', 'vvc', 'Total Accounts receivable (A/R)', '0.00', '0.00', '0.00', '0.00'],
];
const guide = { v: '', w: 'wide', n: 'near', o: 'open', c: 'close' };
const esc = s => s.replace(/&/g, '&amp;');
document.getElementById('rows').innerHTML = data.map(([type, set, g, text, ...vals]) => {
  const lines = [...g].map(c => `<i class="${guide[c]}"></i>`).join('');
  const cells = Array.from({ length: 12 }, (_, i) => `<td>${vals[i] || ''}</td>`).join('');
  return `<tr><td>${type}</td><td>${set}</td><td class="tree"><div>${lines}<span>${esc(text)}</span></div></td>${cells}</tr>`;
}).join('');

// Field list: name, kind (s = sum, m = measure), state
const tables = [
  ['Assets Display Table', '#fff', [['Formatted He...', '', 1], ['Group Set', '', 1], ['Group Type', 's', 1], ['Index', 's', 1]]],
  ['Calendar', '#b9cfe6', [['Date', '', 1], ['DateAsInteger'], ['DayOfWeek'], ['DayOfWeekN...', 's'], ['DayOfWeekSh...'], ['Month'], ['Month Number', 's'], ['MonthNameL...'], ['Quarter'], ['Year', 's'], ['Year/Month'], ['YearMonthSh...'], ['YearQuarter']]],
  ['Trial Balance Values', '#fff', [['Account'], ['Balance', 's'], ['Bank Balance', 's'], ['BS Display YTD', 'm', 1, 'sel'], ['BS L1 YTD', 'm'], ['BS L2 YTD', 'm'], ['BS L3 YTD', 'm', 0, 'hover'], ['BS Single YTD', 'm'], ['ClosingPeriod'], ['Credit', 's'], ['Debit'], ['Expenses Bala...', 's'], ['ID', 's'], ['Index', 's'], ['Period', 's'], ['Profitibility', 's'], ['Year', 's']]],
];
const kinds = {
  s: '<svg width="10" height="10" viewBox="0 0 10 10" fill="none" stroke="#aaa" stroke-width="1.300"><path d="M9 3V1H1l4 4-4 4h8V7"/></svg>',
  m: '<svg width="9" height="12" viewBox="0 0 9 12"><path d="M0 0h9v12H0z" fill="#999"/><path d="M2 1.500h5v2H2zM2 5h1v1H2zM4 5h1v1H4zM6 5h1v1H6zM2 7h1v1H2zM4 7h1v1H4zM6 7h1v1H6zM2 9h1v1H2zM4 9h1v1H4zM6 9h1v1H6z" fill="#fff"/></svg>',
};
const dots = '<svg class="dots" width="14" height="4" viewBox="0 0 14 4" fill="#aaa"><path d="M1 1h2v1H1zM6 1h2v1H6zM11 1h2v1h-2z"/></svg>';
document.getElementById('fields').innerHTML = tables.map(([name, tint, items], t) =>
  `<div class="group${t === 2 ? ' hl' : ''}"><svg width="13" height="12" viewBox="0 0 13 12"><path d="M0 0h13v12H0z" fill="#999"/><path d="M1 3h3v2H1zM5 3h3v2H5zM9 3h3v2H9zM1 6h3v2H1zM5 6h3v2H5zM9 6h3v2H9zM1 9h3v2H1zM5 9h3v2H5zM9 9h3v2H9z" fill="${tint}"/></svg>${name}</div>` +
  items.map(([label, kind = '', on, state = '']) =>
    `<label class="row ${state}"><input type="checkbox"${on ? ' checked' : ''}><span class="kind">${kinds[kind] || ''}</span>${label}${state === 'hover' ? dots : ''}</label>`).join('')
).join('');

// Visual gallery icons
const O = '#e78b3c', G = '#b3b3b3', Y = '#ecc078', B = '#86abd2', D = '#7f7f7f', K = '#3f79bd', R = '#df6145', T = '#6fa58b', P = '#efb3a2';
const r = (x, y, w, h, f) => `<rect x="${x}" y="${y}" width="${w}" height="${h}" fill="${f}"/>`;
const p = (d, s, w = 1, f = 'none') => `<path d="${d}" fill="${f}" stroke="${s}" stroke-width="${w}"/>`;
const ax = p('M.5 0v17.500H18', '#999');
const icons = [
  ['Stacked bar chart', ax + r(1, 3, 6, 5, G) + r(5, 3, 8, 5, O) + r(1, 10, 7, 5, G) + r(8, 10, 8, 5, O)],
  ['Stacked column chart', ax + r(3, 5, 5, 8, O) + r(3, 13, 5, 4, G) + r(10, 2, 5, 9, O) + r(10, 11, 5, 6, G)],
  ['Clustered bar chart', ax + r(1, 2, 10, 3, Y) + r(1, 5, 16, 3, B) + r(1, 10, 13, 3, Y) + r(1, 13, 8, 3, B)],
  ['Clustered column chart', ax + r(2, 7, 3, 10, Y) + r(6, 1, 3, 16, B) + r(10, 4, 3, 13, Y) + r(14, 7, 3, 10, B)],
  ['100% stacked bar chart', ax + r(1, 3, 6, 5, D) + r(6, 3, 10, 5, B) + r(1, 10, 9, 5, D) + r(10, 10, 6, 5, B)],
  ['100% stacked column chart', ax + r(3, 2, 5, 9, B) + r(3, 11, 5, 6, D) + r(11, 2, 5, 7, B) + r(11, 9, 5, 8, D)],
  ['Line chart', ax + p('M1 15l6-5 4 2 7-8', K, 1.5) + p('M1 12l4-1 7-6 4 3 2-3', P, 1.5)],
  ['Area chart', ax + p('M1 7l5-3 4 3 4-4 4 2v5L1 12z', 'none', 0, Y) + p('M6 8l7-6 5 2v8l-8-1z', 'none', 0, O) + p('M1 9l5 1 5 2 7-1v6H1z', 'none', 0, G)],
  ['Stacked area chart', r(0, 0, 18, 18, '#5a5a5a') + p('M0 7l5-5 4 3 5-3 4 3v8H0z', 'none', 0, Y) + p('M0 8l4 3 5-2 4 2 5-4v9H0z', 'none', 0, K) + p('M0 17l5-4 4 3 5-3 4 4v1H0z', 'none', 0, O)],
  ['Line and stacked column chart', ax + r(4, 3, 4, 14, O) + r(4, 13, 4, 4, G) + r(10, 6, 4, 7, O) + r(10, 12, 4, 5, G) + p('M1 14l5-4 5 3 5-6', R, 1.3) + p('M17.500 0v17', O)],
  ['Line and clustered column chart', ax + r(2, 6, 3, 11, Y) + r(6, 1, 3, 16, B) + r(10, 4, 3, 13, Y) + r(13, 7, 3, 10, B) + p('M1 14l5-4 5 3 5-6', R, 1.3) + p('M17.500 0v17', O)],
  ['Ribbon chart', ax + r(2, 7, 4, 10, O) + r(7, 6, 4, 11, '#b6562c') + r(12, 3, 5, 14, O) + r(2, 4, 4, 4, '#f5dcb8') + r(12, 1, 5, 5, '#f5dcb8') + r(2, 13, 4, 3, B) + r(12, 7, 5, 3, B) + p('M6 6l6-2M6 12l6-3', Y, 3)],
  ['Waterfall chart', ax + r(3, 2, 1, 15, '#ddd') + r(4, 2, 3, 2, '#ddd') + r(5, 4, 3, 9, R) + r(9, 8, 3, 6, R) + r(11, 2, 3, 12, T) + r(15, 1, 2, 16, '#aaa')],
  ['Scatter chart', ax + r(4, 5, 3, 3, R) + r(11, 3, 3, 3, T) + r(4, 11, 3, 3, K) + r(9, 9, 3, 3, Y) + r(14, 8, 3, 3, B) + r(12, 13, 3, 3, T)],
  ['Pie chart', '<circle cx="9" cy="9" r="8.500" fill="#86abd2"/>' + p('M9 9V0A9 9 0 0 0 1 6z', '#444', 1, '#f5dcb8') + p('M9 9L1 6a9 9 0 0 0 3 10z', '#444', 1, P)],
  ['Donut chart', '<circle cx="9" cy="9" r="6.500" fill="none" stroke="#3f79bd" stroke-width="5"/>' + p('M9 2.500A6.500 6.500 0 0 1 15.500 8', Y, 5) + p('M3 7l-3-2M4 14l-2 2M14 14l2 3', '#444', 1)],
  ['Treemap', r(0, 0, 18, 18, '#fff') + r(1, 1, 6, 10, B) + r(8, 1, 9, 5, '#bcd0e8') + r(8, 7, 5, 4, '#bcd0e8') + r(14, 7, 3, 4, B) + p('M0 11.500h18M9.500 12v6M7.500 0v11M8 6.500h10', '#555')],
  ['Map', '<circle cx="9" cy="9" r="8" fill="#fff" stroke="#86abd2"/>' + p('M9 1v16M1 9h16M3 5h12M3 13h12M9 1q-8 8 0 16M9 1q8 8 0 16', T)],
  ['Filled map', p('M0 3h9l2 2-2 4 3 8-5-3-4 3v-5L0 10z', 'none', 0, G) + r(2, 5, 6, 6, K) + p('M9 7h8v6l-3 4-5-3z', 'none', 0, B) + p('M14 1h4v7l-3-2z', 'none', 0, Y) + p('M5 4v9M1 8h16M10 3v11', '#444')],
  ['Shape map', p('M1 1h16l-1 11-5 4-9-3z', B, 1.5, '#3b5f85') + p('M6 1v6h6v8M1 8h15M11 1v5', B, 1.3) + p('M0 17.500h8M11 17.500h7', '#999')],
  ['Funnel', r(0, 1, 18, 3, B) + r(2, 5, 14, 3, Y) + r(5, 9, 9, 3, K) + r(7, 12, 6, 3, B) + r(7, 15, 4, 2, B)],
  ['Gauge', p('M2.500 14A6.500 6.500 0 0 1 12 5', Y, 5) + p('M12 5a7 7 0 0 1 3.500 9', T, 5) + p('M8 14l5-5', '#666', 3)],
  ['Card', r(0, 2, 18, 13, '#fff') + '<text x="1" y="10" font-size="9" font-weight="700" fill="#3f79bd">123</text>' + r(3, 12, 12, 1, D)],
  ['Multi-row card', r(0, 0, 18, 18, '#fff') + r(2, 2, 3, 14, G) + r(7, 2, 6, 2, B) + r(7, 5, 4, 1, D) + r(7, 8, 6, 2, B) + r(7, 11, 3, 1, D)],
  ['KPI', r(0, 3, 18, 12, '#fff') + p('M3 9l3-4 3 4z', 'none', 0, T) + p('M9 5h6l-3 4z', 'none', 0, R) + r(3, 12, 12, 1, D)],
  ['Slicer', r(0, 0, 17, 18, '#fff') + r(0, 0, 17, 4, K) + r(3, 5, 3, 3, B) + r(3, 9, 3, 3, Y) + r(3, 13, 3, 3, P) + p('M8 8h10l-3 4v6h-3v-6z', 'none', 0, D)],
  ['Table', r(1, 0, 16, 18, '#fff') + r(1, 0, 16, 4, K) + p('M1 8.500h16M1 13.500h16M6.500 4v14M11.500 4v14', '#bbb')],
  ['Matrix', r(1, 1, 16, 16, '#7a7a7a') + r(1, 1, 16, 2, D) + p('M1 7.500h16M1 12.500h16M6.500 3v14M11.500 3v14', '#444')],
  ['R script visual', '<text x="2" y="17" font-size="23" font-weight="700" fill="#86abd2">R</text>'],
  ['ArcGIS Maps', '<circle cx="9" cy="9" r="8.500" fill="#3f79bd" stroke="#aaa"/>' + p('M3 6l6-4 5 3M3 13l5-5 6 2M7 16l6-4', '#4fb05a', 2.5) + p('M9 0q-8 9 0 18M9 0q8 9 0 18M1 6h16M1 12h16', '#ccc')],
  ['More visuals', r(1, 6, 3, 3, '#eee') + r(7, 6, 3, 3, '#eee') + r(13, 6, 3, 3, '#eee')],
];
document.getElementById('gallery').innerHTML = icons.map(([name, body]) =>
  `<button aria-label="${name}"${name === 'Matrix' ? ' class="on"' : ''}><svg width="18" height="18" viewBox="0 0 18 18">${body}</svg></button>`).join('');
```
